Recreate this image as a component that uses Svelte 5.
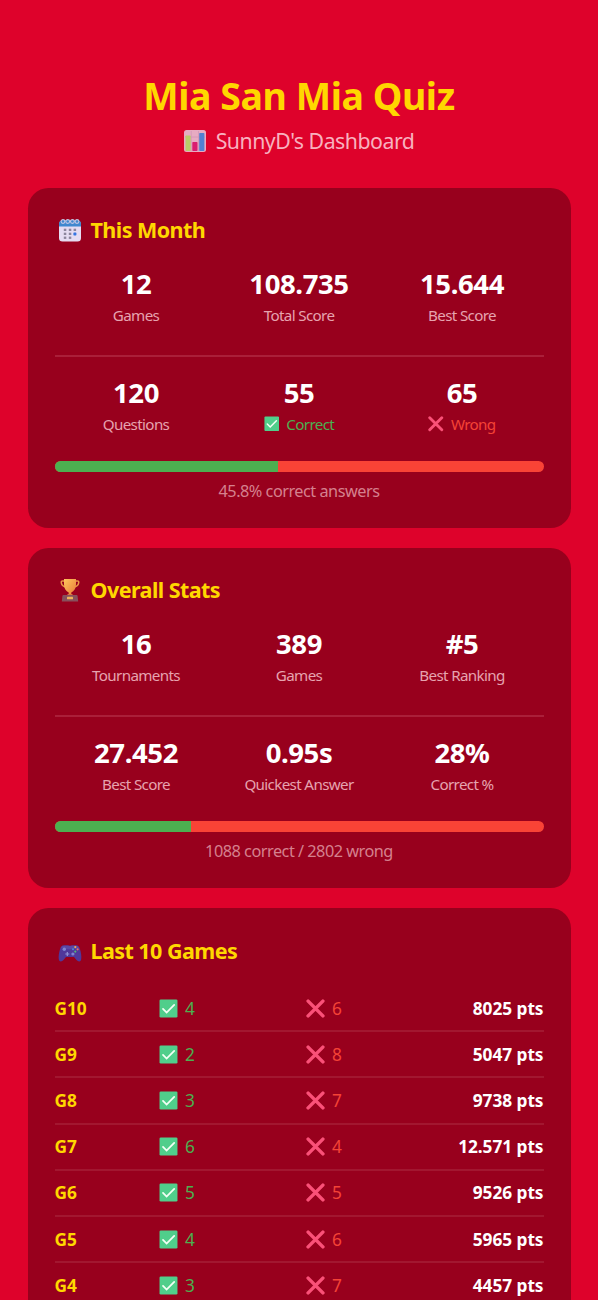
<script lang="ts">
	interface Stat {
		value: string;
		label: string;
		kind?: 'correct' | 'wrong';
	}

	interface Section {
		icon: 'calendar' | 'trophy';
		title: string;
		rows: Stat[][];
		percent: number;
		caption: string;
	}

	const sections: Section[] = [
		{
			icon: 'calendar',
			title: 'This Month',
			rows: [
				[
					{ value: '12', label: 'Games' },
					{ value: '108.735', label: 'Total Score' },
					{ value: '15.644', label: 'Best Score' }
				],
				[
					{ value: '120', label: 'Questions' },
					{ value: '55', label: 'Correct', kind: 'correct' },
					{ value: '65', label: 'Wrong', kind: 'wrong' }
				]
			],
			percent: 45.8,
			caption: '45.8% correct answers'
		},
		{
			icon: 'trophy',
			title: 'Overall Stats',
			rows: [
				[
					{ value: '16', label: 'Tournaments' },
					{ value: '389', label: 'Games' },
					{ value: '#5', label: 'Best Ranking' }
				],
				[
					{ value: '27.452', label: 'Best Score' },
					{ value: '0.95s', label: 'Quickest Answer' },
					{ value: '28%', label: 'Correct %' }
				]
			],
			percent: 28,
			caption: '1088 correct / 2802 wrong'
		}
	];

	const games = [
		{ id: 'G10', correct: 4, wrong: 6, points: '8025' },
		{ id: 'G9', correct: 2, wrong: 8, points: '5047' },
		{ id: 'G8', correct: 3, wrong: 7, points: '9738' },
		{ id: 'G7', correct: 6, wrong: 4, points: '12.571' },
		{ id: 'G6', correct: 5, wrong: 5, points: '9526' },
		{ id: 'G5', correct: 4, wrong: 6, points: '5965' },
		{ id: 'G4', correct: 3, wrong: 7, points: '4457' }
	];
</script>

{#snippet checkIcon()}
	<svg class="mark" viewBox="0 0 18 18">
		<rect x="0.5" y="0.5" width="17" height="17" rx="1.2" fill="#50ce8b" />
		<path d="M3.8 9.4 7.2 12.8 14.4 5.6" fill="none" stroke="#f3fff5" stroke-width="1.7" stroke-linecap="round" />
	</svg>
{/snippet}

{#snippet crossIcon()}
	<svg class="mark" viewBox="0 0 18 18">
		<path d="M2 2 16 16M16 2 2 16" stroke="#fa5178" stroke-width="3.3" stroke-linecap="round" />
	</svg>
{/snippet}

{#snippet calendarIcon()}
	<svg class="title-icon" viewBox="0 0 24 24">
		<rect x="1" y="3" width="22" height="20.5" rx="3.5" fill="#e5dcf2" />
		<path d="M1 8.5V6a4 4 0 0 1 4-4h14a4 4 0 0 1 4 4v2.5Z" fill="#3f88cf" />
		<g fill="none" stroke="#c2c6e4" stroke-width="1.1">
			<circle cx="5" cy="3.5" r="1.9" />
			<circle cx="9.7" cy="3.5" r="1.9" />
			<circle cx="14.4" cy="3.5" r="1.9" />
			<circle cx="19" cy="3.5" r="1.9" />
		</g>
		<g fill="#8c859c">
			<rect x="5.8" y="10.7" width="2.5" height="2.3" />
			<rect x="10.8" y="10.7" width="2.5" height="2.3" />
			<rect x="15.6" y="10.7" width="2.5" height="2.3" />
			<rect x="5.8" y="14.7" width="2.5" height="2.3" />
			<rect x="10.8" y="14.7" width="2.5" height="2.3" />
			<rect x="5.8" y="18.6" width="2.5" height="2.3" />
			<rect x="10.8" y="18.6" width="2.5" height="2.3" />
		</g>
		<rect x="15.4" y="14.4" width="3" height="3" rx="0.7" fill="#3474e2" />
	</svg>
{/snippet}

{#snippet trophyIcon()}
	<svg class="title-icon trophy" viewBox="0 0 24 24">
		<defs>
			<linearGradient id="cup" x1="0" y1="0" x2="1" y2="1">
				<stop offset="0" stop-color="#ffc65c" />
				<stop offset="1" stop-color="#e87a38" />
			</linearGradient>
		</defs>
		<path d="M7 3H4.5Q3 3 3.3 4.8 4 8.5 8.4 9.1M17 3h2.5q1.5 0 1.2 1.8-.7 3.7-5.100 4.300" fill="none" stroke="#eb9845" stroke-width="1.5" />
		<path d="M6 1h12v5.5c0 4-2 6.500-4.700 8V17h-2.600v-2.500C8 13 6 10.500 6 6.500Z" fill="url(#cup)" />
		<path d="m8.500 17.500 1.500-1.500h4l1.500 1.500Z" fill="#dc7440" />
		<path d="M5.500 17h13q1 0 1.100 1l.6 5.500H3.800l.6-5.500q.1-1 1.100-1Z" fill="#87505c" />
		<rect x="9" y="18.8" width="6" height="2.4" rx=".5" fill="#f0b45b" />
	</svg>
{/snippet}

{#snippet gamepadIcon()}
	<svg class="title-icon gamepad" viewBox="0 0 24 24">
		<path d="M6 5.300h4q2 .8 4 0h4c2.300 0 3.200 1.400 4 4 1 3.300 1.700 7.300 1.200 10-.6 3-3 2.500-4.700.7L16 17H8l-2.500 3c-1.700 1.800-4.100 2.300-4.700-.7-.5-2.700.2-6.700 1.200-10 .8-2.600 1.700-4 4-4Z" fill="#50379b" />
		<path d="M6 5.700h4q2 .8 4 0h4q2 0 3 2.300-9 2.500-18 0 1-2.300 3-2.300Z" fill="#6558ac" opacity=".55" />
		<circle cx="6.3" cy="9.3" r="1.7" fill="#7e82d2" />
		<circle cx="14.9" cy="14" r="1.6" fill="#7e82d2" />
		<path d="M9.3 12v4M7.3 14h4" stroke="#9292d8" stroke-width="1.2" />
		<circle cx="15" cy="9.3" r="1" fill="#498dd9" />
		<circle cx="19.6" cy="9.3" r="1.1" fill="#f16e65" />
		<circle cx="17.3" cy="7.1" r="1.1" fill="#f0a951" />
		<circle cx="17.3" cy="11.6" r="1.1" fill="#55b877" />
	</svg>
{/snippet}

<main class="page">
	<header>
		<h1>Mia San Mia Quiz</h1>
		<p class="subtitle">
			<svg class="chart-icon" viewBox="0 0 22 22">
				<rect width="22" height="22" rx="2.5" fill="#e7abc2" />
				<path d="M7.2 1v20M14.5 1v20M1 7h20" stroke="#d296b8" stroke-width=".8" />
				<rect x="1.5" y="5.5" width="5.2" height="15.5" rx=".7" fill="#b9cb68" />
				<rect x="8.3" y="12" width="5.2" height="9" rx=".7" fill="#da1d70" />
				<rect x="15.2" y="3" width="5.2" height="18" rx=".7" fill="#5280d1" />
			</svg>
			<span>SunnyD's Dashboard</span>
		</p>
	</header>

	{#each sections as section}
		<section class="card">
			<h2>
				{#if section.icon === 'calendar'}
					{@render calendarIcon()}
				{:else}
					{@render trophyIcon()}
				{/if}
				<span>{section.title}</span>
			</h2>
			{#each section.rows as row}
				<div class="stats">
					{#each row as stat}
						<div class="stat">
							<div class="value">{stat.value}</div>
							<div class="label {stat.kind ?? ''}">
								{#if stat.kind === 'correct'}
									{@render checkIcon()}
								{:else if stat.kind === 'wrong'}
									{@render crossIcon()}
								{/if}
								<span>{stat.label}</span>
							</div>
						</div>
					{/each}
				</div>
			{/each}
			<div class="bar">
				<div class="bar-fill" style="width: {section.percent}%"></div>
			</div>
			<p class="caption">{section.caption}</p>
		</section>
	{/each}

	<section class="card">
		<h2>
			{@render gamepadIcon()}
			<span>Last 10 Games</span>
		</h2>
		<div class="games">
			{#each games as game}
				<div class="game">
					<span class="game-id">{game.id}</span>
					<span class="count correct">{@render checkIcon()}{game.correct}</span>
					<span class="count wrong">{@render crossIcon()}{game.wrong}</span>
					<span class="points">{game.points} pts</span>
				</div>
			{/each}
		</div>
	</section>
</main>

<style>
	:global(body) {
		margin: 0;
		background: #de022b;
	}

	.page {
		box-sizing: border-box;
		height: 1300px;
		overflow: hidden;
		padding: 69px 27.5px 0;
		background: #de022b;
		color: #fff;
		font-family: 'Noto Sans', 'Open Sans', sans-serif;
	}

	header {
		height: 119px;
		text-align: center;
	}

	h1 {
		margin: 0;
		color: #ffd700;
		font-size: 37.5px;
		font-weight: 700;
		line-height: 54px;
		letter-spacing: -0.45px;
	}

	.subtitle {
		display: flex;
		align-items: center;
		justify-content: center;
		gap: 10px;
		margin: 2px 0 0;
		color: #f8b1bf;
		font-size: 21.3px;
		line-height: 32px;
		letter-spacing: -0.5px;
	}

	.chart-icon {
		width: 22px;
		height: 22px;
	}

	.card {
		box-sizing: border-box;
		height: 340px;
		margin-bottom: 20px;
		padding: 27px;
		border-radius: 20.4px;
		background: #98001d;
	}

	.card:last-child {
		height: 480px;
		padding-top: 28px;
	}

	h2 {
		display: flex;
		align-items: center;
		gap: 9px;
		margin: 0 0 20px;
		padding-left: 3px;
		color: #ffd700;
		font-size: 21.5px;
		font-weight: 700;
		line-height: 30px;
		letter-spacing: -0.55px;
	}

	.title-icon {
		width: 24px;
		height: 24px;
		flex-shrink: 0;
	}

	.gamepad {
		position: relative;
		top: 1px;
	}

	.stats {
		display: grid;
		grid-template-columns: repeat(3, 1fr);
	}

	.stats + .stats {
		margin-top: 29px;
		padding-top: 17px;
		border-top: 2px solid #aa1f39;
	}

	.stat {
		text-align: center;
	}

	.value {
		font-size: 27.5px;
		font-weight: 700;
		line-height: 38px;
		letter-spacing: -0.4px;
	}

	.label {
		display: flex;
		align-items: center;
		justify-content: center;
		gap: 7px;
		padding-top: 1px;
		color: #e6a3af;
		font-size: 15.2px;
		line-height: 22px;
		letter-spacing: -0.65px;
	}

	.label.correct,
	.correct {
		color: #4caf50;
	}

	.label.wrong,
	.wrong {
		color: #f44336;
	}

	.mark {
		width: 15.5px;
		height: 15.5px;
		flex-shrink: 0;
	}

	.bar {
		height: 11px;
		margin-top: 26px;
		overflow: hidden;
		border-radius: 6px;
		background: #f94336;
	}

	.bar-fill {
		height: 100%;
		background: #4caf50;
	}

	.caption {
		margin: 7px 0 0;
		color: #d5808e;
		font-size: 16.3px;
		line-height: 24px;
		letter-spacing: -0.5px;
		text-align: center;
	}

	.games {
		margin-top: 20px;
	}

	.game {
		display: grid;
		grid-template-columns: 104.5px 147px 1fr auto;
		align-items: center;
		box-sizing: border-box;
		height: 46.2px;
		border-bottom: 2px solid #a21730;
		font-size: 17.3px;
		letter-spacing: -0.05px;
	}

	.game-id {
		color: #ffd700;
		font-weight: 700;
	}

	.count {
		display: flex;
		align-items: center;
		gap: 7px;
	}

	.count .mark {
		width: 19px;
		height: 19px;
	}

	.points {
		font-weight: 700;
	}
</style>
